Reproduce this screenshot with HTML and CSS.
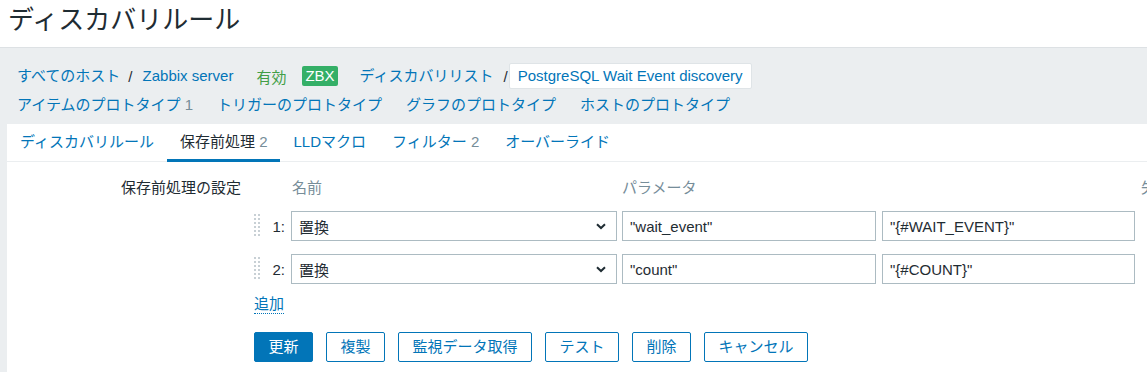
FILE: index.html
```html
<!DOCTYPE html>
<html lang="ja">
<head>
<meta charset="utf-8">
<title>ディスカバリルール</title>
<link rel="stylesheet" href="styles.css">
</head>
<body>
<header class="page-header">
  <h1 class="page-title">ディスカバリルール</h1>
</header>
<main class="main">
  <nav class="navs">
    <div class="nav-row nav-row-1">
      <a class="lnk">すべてのホスト</a>
      <span class="sep">/</span>
      <a class="lnk">Zabbix server</a>
      <span class="status-on">有効</span>
      <span class="badge">ZBX</span>
      <a class="lnk">ディスカバリリスト</a>
      <span class="sep sep-tight">/</span>
      <span class="crumb-box">PostgreSQL Wait Event discovery</span>
    </div>
    <div class="nav-row nav-row-2">
      <a class="lnk">アイテムのプロトタイプ <span class="count">1</span></a>
      <a class="lnk">トリガーのプロトタイプ</a>
      <a class="lnk">グラフのプロトタイプ</a>
      <a class="lnk">ホストのプロトタイプ</a>
    </div>
  </nav>
  <section class="panel">
    <ul class="tabs">
      <li class="tab">ディスカバリルール</li>
      <li class="tab active">保存前処理 <span class="count">2</span></li>
      <li class="tab">LLDマクロ</li>
      <li class="tab">フィルター <span class="count">2</span></li>
      <li class="tab">オーバーライド</li>
    </ul>
    <div class="form">
      <div class="form-label">保存前処理の設定</div>
      <div class="form-field">
        <div class="pp-head">
          <span class="h-name">名前</span>
          <span class="h-param">パラメータ</span>
          <span class="h-param2"></span>
          <span class="h-fail">失敗時</span>
        </div>
        <div class="pp-row">
          <span class="handle"><svg width="8" height="24" viewBox="0 0 8 24"><g fill="#c8d0d5"><rect x="0" y="0" width="2" height="2"/><rect x="4" y="0" width="2" height="2"/><rect x="0" y="4" width="2" height="2"/><rect x="4" y="4" width="2" height="2"/><rect x="0" y="8" width="2" height="2"/><rect x="4" y="8" width="2" height="2"/><rect x="0" y="12" width="2" height="2"/><rect x="4" y="12" width="2" height="2"/><rect x="0" y="16" width="2" height="2"/><rect x="4" y="16" width="2" height="2"/><rect x="0" y="20" width="2" height="2"/><rect x="4" y="20" width="2" height="2"/></g></svg></span>
          <span class="num">1:</span>
          <div class="select"><span>置換</span><svg class="chev" width="10" height="7" viewBox="0 0 10 7"><path d="M1 1.2 L5 5 L9 1.2" fill="none" stroke="#1f2c33" stroke-width="2"/></svg></div>
          <input class="inp inp-1" type="text" value="&quot;wait_event&quot;">
          <input class="inp inp-2" type="text" value="&quot;{#WAIT_EVENT}&quot;">
        </div>
        <div class="pp-row">
          <span class="handle"><svg width="8" height="24" viewBox="0 0 8 24"><g fill="#c8d0d5"><rect x="0" y="0" width="2" height="2"/><rect x="4" y="0" width="2" height="2"/><rect x="0" y="4" width="2" height="2"/><rect x="4" y="4" width="2" height="2"/><rect x="0" y="8" width="2" height="2"/><rect x="4" y="8" width="2" height="2"/><rect x="0" y="12" width="2" height="2"/><rect x="4" y="12" width="2" height="2"/><rect x="0" y="16" width="2" height="2"/><rect x="4" y="16" width="2" height="2"/><rect x="0" y="20" width="2" height="2"/><rect x="4" y="20" width="2" height="2"/></g></svg></span>
          <span class="num">2:</span>
          <div class="select"><span>置換</span><svg class="chev" width="10" height="7" viewBox="0 0 10 7"><path d="M1 1.2 L5 5 L9 1.2" fill="none" stroke="#1f2c33" stroke-width="2"/></svg></div>
          <input class="inp inp-1" type="text" value="&quot;count&quot;">
          <input class="inp inp-2" type="text" value="&quot;{#COUNT}&quot;">
        </div>
        <div class="add-row"><a class="add-link">追加</a></div>
        <div class="buttons">
          <button class="btn btn-primary">更新</button>
          <button class="btn">複製</button>
          <button class="btn">監視データ取得</button>
          <button class="btn">テスト</button>
          <button class="btn">削除</button>
          <button class="btn">キャンセル</button>
        </div>
      </div>
    </div>
  </section>
</main>
</body>
</html>
```

FILE: styles.css
```css
* { box-sizing: border-box; }
html, body {
  margin: 0;
  padding: 0;
  overflow: hidden;
  background: #ffffff;
}
body {
  font-family: "Liberation Sans", "Noto Sans CJK JP", sans-serif;
  font-size: 15px;
  color: #1f2c33;
  width: 1147px;
  height: 372px;
}
.page-header {
  height: 48px;
  border-bottom: 1px solid #dde1e4;
  padding: 5px 0 0 8px;
}
.page-title {
  margin: 0;
  font-size: 26px;
  line-height: 30px;
  font-weight: normal;
  color: #1f2c33;
}
.main {
  background: #ebeef0;
  padding: 15px 0 0 7px;
  height: 324px;
}
.navs {
  padding-left: 10px;
}
.nav-row {
  display: flex;
  align-items: center;
  white-space: nowrap;
}
.nav-row-1 { height: 26px; }
.nav-row-2 { height: 20px; margin-top: 6px; gap: 24px; }
.lnk {
  color: #0275b8;
  line-height: 20px;
}
.sep {
  margin: 0 10px 0 8px;
  color: #1f2c33;
}
.sep-tight { margin: 0 1px 0 10px; }
.status-on {
  color: #429e47;
  margin-left: 23px;
}
.badge {
  background: #34af67;
  color: #fff;
  height: 20px;
  line-height: 20px;
  padding: 0 3px;
  border-radius: 2px;
  margin: 0 22px 0 16px;
}
.crumb-box {
  color: #0275b8;
  background: #fff;
  border: 1px solid #dfe4e7;
  border-radius: 2px;
  height: 26px;
  line-height: 24px;
  padding: 0 8px;
}
.count { color: #768d99; }
.panel {
  background: #fff;
  margin-top: 9px;
  height: 260px;
  overflow: hidden;
}
.tabs {
  list-style: none;
  margin: 0;
  padding: 0;
  display: flex;
  height: 38px;
  border-bottom: 1px solid #ebeef0;
}
.tab {
  color: #0275b8;
  padding: 0 13px;
  height: 38px;
  line-height: 35px;
  border-bottom: 3px solid transparent;
  white-space: nowrap;
}
.tab.active {
  color: #1f2c33;
  border-bottom-color: #0275b8;
}
.form {
  display: grid;
  grid-template-columns: 234px 1fr;
  column-gap: 13px;
  padding-top: 14px;
}
.form-label {
  text-align: right;
  line-height: 24px;
  white-space: nowrap;
}
.form-field { min-width: 0; }
.pp-head {
  display: flex;
  height: 24px;
  line-height: 24px;
  color: #768d99;
  white-space: nowrap;
  margin-bottom: 11px;
}
.pp-head > span { flex-shrink: 0; }
.h-name { width: 368px; padding-left: 38px; }
.h-param { width: 260px; }
.h-param2 { width: 259px; }
.h-fail { width: 60px; }
.pp-row {
  display: flex;
  align-items: center;
  height: 30px;
  margin-bottom: 13px;
}
.pp-row > * { flex-shrink: 0; }
.handle {
  width: 8px;
  height: 24px;
  display: flex;
}
.num {
  width: 29px;
  text-align: right;
  padding-right: 6px;
}
.select {
  width: 326px;
  height: 30px;
  border: 1px solid #acbbc2;
  background: #fff;
  display: flex;
  align-items: center;
  justify-content: space-between;
  padding: 0 10px 0 7px;
}
.chev { display: block; }
.inp {
  height: 30px;
  border: 1px solid #acbbc2;
  padding: 0 7px;
  font-family: "Liberation Sans", "Noto Sans CJK JP", sans-serif;
  font-size: 15px;
  color: #1f2c33;
  background: #fff;
  outline: none;
}
.inp-1 { width: 254px; margin-left: 5px; }
.inp-2 { width: 253px; margin-left: 6px; }
.add-row {
  margin-top: -3px;
  height: 20px;
  line-height: 20px;
}
.add-link {
  color: #0275b8;
  border-bottom: 1px dotted #0275b8;
  padding-bottom: 1px;
}
.buttons {
  display: flex;
  gap: 13px;
  margin-top: 18px;
}
.btn {
  height: 30px;
  padding: 0 13.5px;
  border: 1px solid #0275b8;
  border-radius: 2px;
  background: #fff;
  color: #0275b8;
  font-family: "Liberation Sans", "Noto Sans CJK JP", sans-serif;
  font-size: 15px;
  line-height: 28px;
}
.btn-primary {
  background: #0275b8;
  color: #fff;
}
```
